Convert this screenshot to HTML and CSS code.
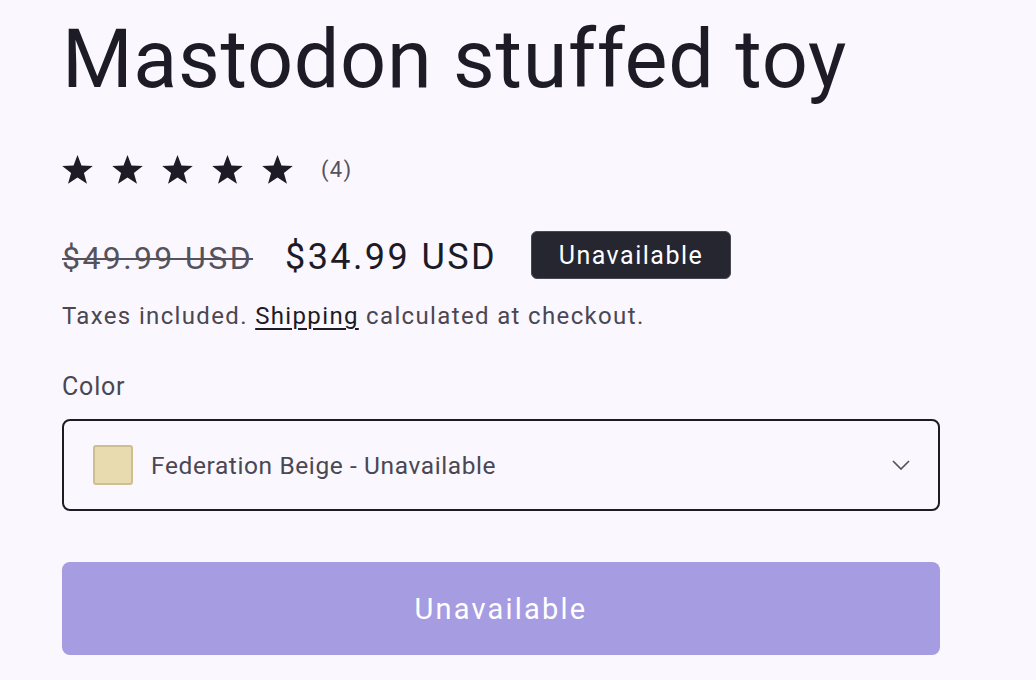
FILE: index.html
```html
<!DOCTYPE html>
<html lang="en">
<head>
<meta charset="utf-8">
<title>Mastodon stuffed toy</title>
<link rel="stylesheet" href="styles.css">
</head>
<body>
<main class="product">
  <h1 class="title">Mastodon stuffed toy</h1>
  <div class="rating">
    <span class="stars">
      <svg class="star" viewBox="2 2.5 20 19"><path d="M12 2.5l2.6 6.9 7.4.3-5.8 4.6 2 7.1L12 17.3l-6.2 4.1 2-7.1L2 9.7l7.4-.3z"/></svg>
      <svg class="star" viewBox="2 2.5 20 19"><path d="M12 2.5l2.6 6.9 7.4.3-5.8 4.6 2 7.1L12 17.3l-6.2 4.1 2-7.1L2 9.7l7.4-.3z"/></svg>
      <svg class="star" viewBox="2 2.5 20 19"><path d="M12 2.5l2.6 6.9 7.4.3-5.8 4.6 2 7.1L12 17.3l-6.2 4.1 2-7.1L2 9.7l7.4-.3z"/></svg>
      <svg class="star" viewBox="2 2.5 20 19"><path d="M12 2.5l2.6 6.9 7.4.3-5.8 4.6 2 7.1L12 17.3l-6.2 4.1 2-7.1L2 9.7l7.4-.3z"/></svg>
      <svg class="star" viewBox="2 2.5 20 19"><path d="M12 2.5l2.6 6.9 7.4.3-5.8 4.6 2 7.1L12 17.3l-6.2 4.1 2-7.1L2 9.7l7.4-.3z"/></svg>
    </span>
    <span class="count">(4)</span>
  </div>
  <div class="price-row">
    <div class="prices">
      <s class="price-old">$49.99 USD</s>
      <span class="price-new">$34.99 USD</span>
    </div>
    <span class="badge">Unavailable</span>
  </div>
  <p class="taxes">Taxes included. <a class="link" href="#">Shipping</a> calculated at checkout.</p>
  <div class="field">
    <label class="label">Color</label>
    <div class="select">
      <span class="swatch"></span>
      <span class="select-text">Federation Beige - Unavailable</span>
      <svg class="chevron" viewBox="0 0 18 10"><path d="M1 1l8 8 8-8" fill="none" stroke="#55525c" stroke-width="1.7"/></svg>
    </div>
  </div>
  <button class="buy" type="button">Unavailable</button>
</main>
</body>
</html>
```
FILE: styles.css
```css
html, body {
  margin: 0;
  padding: 0;
  background: #faf7fe;
}
body {
  font-family: Roboto, "Liberation Sans", sans-serif;
  color: #1c1b26;
}
.product {
  width: 878px;
  padding: 0 0 0 62px;
}
.title {
  margin: 0;
  padding-top: 14px;
  font-size: 81px;
  font-weight: 400;
  line-height: 92px;
  letter-spacing: 0.65px;
  color: #1c1b26;
}
.rating {
  display: flex;
  align-items: center;
  margin-top: 49px;
  height: 29px;
}
.stars {
  display: flex;
  gap: 19px;
}
.star {
  display: block;
  width: 31px;
  height: 29px;
  fill: #1c1b26;
}
.count {
  margin-left: 28px;
  font-size: 22px;
  letter-spacing: 1.3px;
  color: #55525c;
}
.price-row {
  display: flex;
  align-items: center;
  margin-top: 47px;
  height: 48px;
}
.prices {
  display: flex;
  align-items: baseline;
  padding-top: 4px;
}
.price-old {
  font-size: 32px;
  line-height: 40px;
  letter-spacing: 2.4px;
  color: #55525c;
  text-decoration-thickness: 2px;
}
.price-new {
  margin-left: 32px;
  font-size: 36px;
  line-height: 40px;
  letter-spacing: 2.4px;
  color: #1c1b26;
}
.badge {
  margin-left: 34px;
  box-sizing: border-box;
  height: 48px;
  width: 200px;
  display: flex;
  align-items: center;
  justify-content: center;
  background: #252630;
  border: 1px solid #474853;
  border-radius: 6px;
  color: #ffffff;
  font-size: 25px;
  letter-spacing: 1.5px;
}
.taxes {
  margin: 22px 0 0;
  font-size: 24px;
  line-height: 30px;
  letter-spacing: 1.35px;
  color: #4a4752;
}
.link {
  color: #1c1b26;
  text-decoration: underline;
  text-decoration-thickness: 2px;
  text-underline-offset: 4px;
}
.field {
  margin-top: 40px;
}
.label {
  display: block;
  font-size: 25px;
  line-height: 32px;
  letter-spacing: 0.8px;
  color: #4a4752;
}
.select {
  margin-top: 16px;
  box-sizing: border-box;
  height: 92px;
  display: flex;
  align-items: center;
  padding: 0 28px 0 29px;
  border: 2px solid #1c1b26;
  border-radius: 8px;
}
.swatch {
  box-sizing: border-box;
  width: 40px;
  height: 40px;
  background: #e8dbb0;
  border: 2px solid #cdbf92;
  border-radius: 3px;
}
.select-text {
  flex: 1;
  margin-left: 18px;
  font-size: 24.5px;
  letter-spacing: 0.6px;
  color: #4a4752;
}
.chevron {
  display: block;
  width: 18px;
  height: 10px;
}
.buy {
  display: block;
  margin-top: 51px;
  width: 878px;
  height: 93px;
  border: 0;
  border-radius: 8px;
  background: #a69ce1;
  color: #ffffff;
  font-family: Roboto, "Liberation Sans", sans-serif;
  font-size: 29px;
  letter-spacing: 2.2px;
}
```
